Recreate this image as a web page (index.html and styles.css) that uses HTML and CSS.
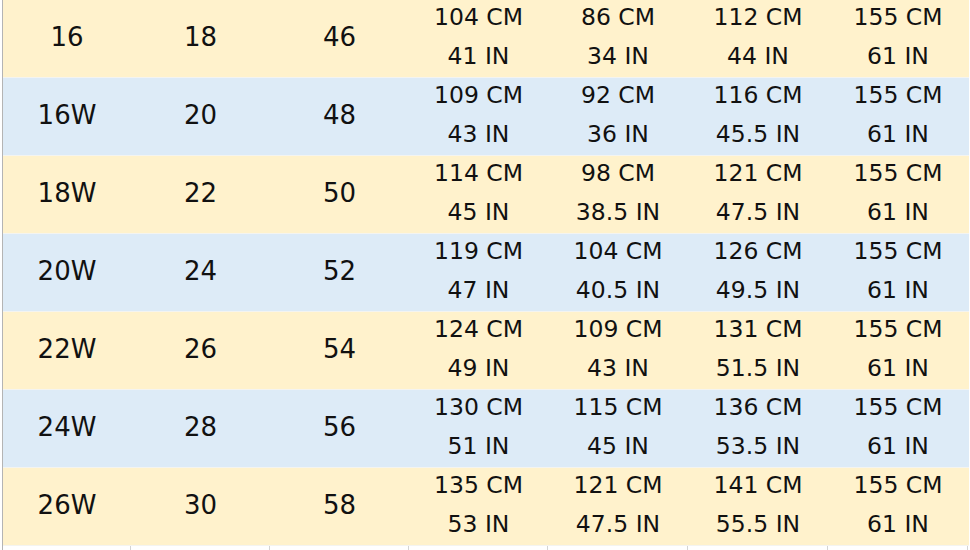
FILE: index.html
```html
<!DOCTYPE html>
<html>
<head>
<meta charset="utf-8">
<link rel="stylesheet" href="styles.css">
</head>
<body>
<div class="sheet">
  <div class="row gold">
    <div class="big">16</div><div class="big">18</div><div class="big">46</div>
    <div class="m"><span>104 CM</span><span>41 IN</span></div>
    <div class="m"><span>86 CM</span><span>34 IN</span></div>
    <div class="m"><span>112 CM</span><span>44 IN</span></div>
    <div class="m"><span>155 CM</span><span>61 IN</span></div>
  </div>
  <div class="row blue">
    <div class="big">16W</div><div class="big">20</div><div class="big">48</div>
    <div class="m"><span>109 CM</span><span>43 IN</span></div>
    <div class="m"><span>92 CM</span><span>36 IN</span></div>
    <div class="m"><span>116 CM</span><span>45.5 IN</span></div>
    <div class="m"><span>155 CM</span><span>61 IN</span></div>
  </div>
  <div class="row gold">
    <div class="big">18W</div><div class="big">22</div><div class="big">50</div>
    <div class="m"><span>114 CM</span><span>45 IN</span></div>
    <div class="m"><span>98 CM</span><span>38.5 IN</span></div>
    <div class="m"><span>121 CM</span><span>47.5 IN</span></div>
    <div class="m"><span>155 CM</span><span>61 IN</span></div>
  </div>
  <div class="row blue">
    <div class="big">20W</div><div class="big">24</div><div class="big">52</div>
    <div class="m"><span>119 CM</span><span>47 IN</span></div>
    <div class="m"><span>104 CM</span><span>40.5 IN</span></div>
    <div class="m"><span>126 CM</span><span>49.5 IN</span></div>
    <div class="m"><span>155 CM</span><span>61 IN</span></div>
  </div>
  <div class="row gold">
    <div class="big">22W</div><div class="big">26</div><div class="big">54</div>
    <div class="m"><span>124 CM</span><span>49 IN</span></div>
    <div class="m"><span>109 CM</span><span>43 IN</span></div>
    <div class="m"><span>131 CM</span><span>51.5 IN</span></div>
    <div class="m"><span>155 CM</span><span>61 IN</span></div>
  </div>
  <div class="row blue">
    <div class="big">24W</div><div class="big">28</div><div class="big">56</div>
    <div class="m"><span>130 CM</span><span>51 IN</span></div>
    <div class="m"><span>115 CM</span><span>45 IN</span></div>
    <div class="m"><span>136 CM</span><span>53.5 IN</span></div>
    <div class="m"><span>155 CM</span><span>61 IN</span></div>
  </div>
  <div class="row gold">
    <div class="big">26W</div><div class="big">30</div><div class="big">58</div>
    <div class="m"><span>135 CM</span><span>53 IN</span></div>
    <div class="m"><span>121 CM</span><span>47.5 IN</span></div>
    <div class="m"><span>141 CM</span><span>55.5 IN</span></div>
    <div class="m"><span>155 CM</span><span>61 IN</span></div>
  </div>
  <div class="row foot">
    <div></div><div></div><div></div><div></div><div></div><div></div><div></div>
  </div>
</div>
</body>
</html>
```
FILE: styles.css
```css
html, body {
  margin: 0;
  padding: 0;
  background: #ffffff;
}
body {
  font-family: "DejaVu Sans", Verdana, sans-serif;
  color: #111111;
  overflow: hidden;
}
.sheet {
  margin-left: 2px;
  border-left: 1px solid #b4b4b4;
  width: 966px;
  height: 550px;
}
.row {
  display: grid;
  grid-template-columns: 128px 139px 139px 139px 140px 140px 140px;
  height: 77px;
  border-bottom: 1px solid #f4f4f0;
}
.gold { background: #fff2cc; }
.blue { background: #ddebf7; }
.big {
  display: flex;
  align-items: center;
  justify-content: center;
  font-size: 26px;
  padding-bottom: 4px;
}
.m {
  display: flex;
  flex-direction: column;
  align-items: center;
  font-size: 23.5px;
  line-height: 39px;
  margin-top: -2px;
}
.foot {
  height: 6px;
  border-bottom: none;
}
.foot div {
  border-right: 1px solid #d4d4d4;
}
```
